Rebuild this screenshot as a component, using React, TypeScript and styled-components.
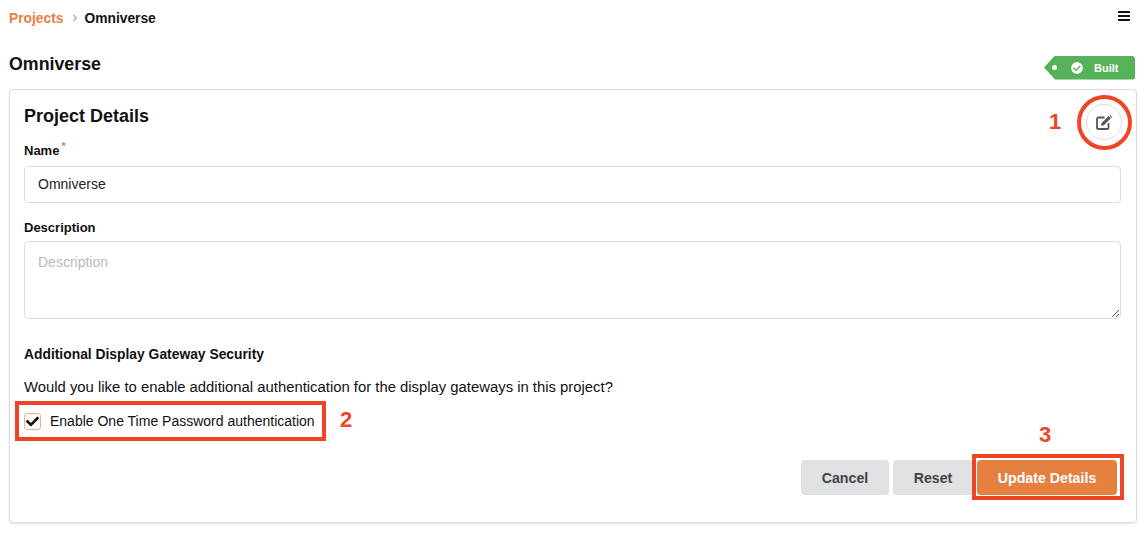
import React from "react";
import styled, { createGlobalStyle } from "styled-components";
import { FaCheckCircle, FaCheck, FaChevronRight } from "react-icons/fa";

const GlobalStyle = createGlobalStyle`
    html, body {
        margin: 0;
        padding: 0;
        background: #fff;
        font-family: "Liberation Sans", Arial, sans-serif;
        color: #111;
    }
    * { box-sizing: border-box; }
`;

const Page = styled.div`
    position: relative;
    width: 1146px;
    height: 533px;
    padding: 0 9px;
    overflow: hidden;
`;

const TopBar = styled.div`
    display: flex;
    align-items: center;
    justify-content: space-between;
    height: 36px;
    padding-right: 7px;
`;

const Crumbs = styled.nav`
    display: flex;
    align-items: center;
    font-size: 13.8px;
    font-weight: 700;
`;

const CrumbLink = styled.a`
    color: #e9803f;
`;

const CrumbArrow = styled.span`
    display: flex;
    margin: 0 5px 0 8px;
    color: #aaa;
    font-size: 8px;
`;

const MenuIcon = styled.div`
    display: flex;
    flex-direction: column;
    gap: 2px;
    width: 12px;
    margin-top: -4px;
    span {
        height: 2px;
        background: #111;
    }
`;

const TitleRow = styled.div`
    display: flex;
    align-items: center;
    justify-content: space-between;
    height: 53px;
    padding: 9px 2px 0 0;
`;

const PageTitle = styled.h1`
    margin: 0 0 6px;
    font-size: 17.8px;
    font-weight: 700;
`;

const Badge = styled.div`
    display: flex;
    align-items: center;
    width: 91px;
    height: 24px;
    margin-top: 1px;
    padding-left: 8px;
    background: #56b258;
    color: #fff;
    font-size: 11px;
    font-weight: 700;
    border-radius: 0 3px 3px 0;
    clip-path: polygon(0 50%, 11px 0, 100% 0, 100% 100%, 11px 100%);
    svg {
        font-size: 12px;
        margin: 0 11px 0 14px;
    }
`;

const BadgeDot = styled.span`
    width: 5px;
    height: 5px;
    border-radius: 50%;
    background: #fff;
`;

const Card = styled.section`
    height: 434px;
    padding: 15px 14px;
    border: 1px solid #dcdcdc;
    border-radius: 4px;
    box-shadow: 0 1px 2px rgba(0, 0, 0, 0.12);
`;

const CardHeader = styled.div`
    display: flex;
    align-items: center;
    justify-content: space-between;
    height: 23px;
`;

const CardTitle = styled.h2`
    margin: 0;
    font-size: 18px;
    font-weight: 700;
`;

const EditButton = styled.button`
    display: flex;
    align-items: center;
    justify-content: center;
    width: 36px;
    height: 36px;
    margin: 11px 0 0 0;
    padding: 0;
    color: #555;
    background: #fff;
    border: 1px solid #ddd;
    border-radius: 50%;
`;

const Label = styled.label<{ $top: number }>`
    display: block;
    margin-top: ${(p) => p.$top}px;
    font-size: 13px;
    font-weight: 700;
    line-height: 16px;
`;

const SectionLabel = styled(Label)`
    font-size: 13.85px;
`;

const Required = styled.sup`
    margin-left: 2px;
    color: #e9803f;
    font-size: 11px;
    line-height: 0;
`;

const TextInput = styled.input`
    display: block;
    width: 1097px;
    height: 37px;
    margin-top: 7px;
    padding: 0 13px 2px;
    color: #222;
    font: 14px "Liberation Sans", Arial, sans-serif;
    border: 1px solid #dcdcdc;
    border-radius: 4px;
`;

const TextArea = styled.textarea`
    display: block;
    width: 1097px;
    height: 78px;
    margin-top: 5px;
    padding: 12px 13px;
    font: 14px "Liberation Sans", Arial, sans-serif;
    border: 1px solid #dcdcdc;
    border-radius: 4px;
    &::placeholder {
        color: #bbb;
    }
`;

const Paragraph = styled.p`
    margin: 17px 0 0;
    font-size: 14.85px;
    line-height: 16px;
`;

const CheckRow = styled.div`
    display: flex;
    align-items: center;
    gap: 9px;
    height: 18px;
    margin-top: 17px;
    font-size: 14px;
`;

const CheckBox = styled.span`
    display: flex;
    align-items: center;
    justify-content: center;
    width: 17px;
    height: 17px;
    color: #111;
    font-size: 13px;
    border: 1px solid #eeb08a;
    border-radius: 3px;
`;

const Actions = styled.div`
    display: flex;
    justify-content: flex-end;
    gap: 4px;
    margin-top: 30px;
    padding-right: 5px;
`;

const ActionButton = styled.button<{ $primary?: boolean; $width: number }>`
    width: ${(p) => p.$width}px;
    height: 35px;
    padding: 0;
    color: ${(p) => (p.$primary ? "#fff" : "#444")};
    font: 700 14.2px "Liberation Sans", Arial, sans-serif;
    background: ${(p) => (p.$primary ? "#e5803f" : "#e0e1e3")};
    border: 0;
    border-radius: 4px;
`;

const Marker = styled.div<{ $x: number; $y: number; $w: number; $h: number; $round?: boolean }>`
    position: absolute;
    left: ${(p) => p.$x}px;
    top: ${(p) => p.$y}px;
    width: ${(p) => p.$w}px;
    height: ${(p) => p.$h}px;
    border: 4px solid #ee4427;
    border-radius: ${(p) => (p.$round ? "50%" : "0")};
`;

const Callout = styled.span<{ $x: number; $y: number }>`
    position: absolute;
    left: ${(p) => p.$x}px;
    top: ${(p) => p.$y}px;
    color: #ee4427;
    font-size: 22px;
    font-weight: 700;
    line-height: 24px;
`;

function EditIcon() {
    return (
        <svg width="17" height="15" viewBox="0 0 17 15" fill="none">
            <path d="M8.5 2.5H2.6C1.7 2.5 1 3.2 1 4.1v8.3c0 .9.7 1.6 1.6 1.6h8.3c.9 0 1.6-.7 1.6-1.6V8" stroke="currentColor" strokeWidth="1.8" />
            <path d="M5 10.8 5.6 8 12.6 1l2.3 2.3-7 7z" fill="currentColor" />
            <path d="M13.4.4l.6-.4 2.4 2.4-.7.7z" fill="currentColor" />
        </svg>
    );
}

export default function App() {
    return (
        <Page>
            <GlobalStyle />
            <TopBar>
                <Crumbs>
                    <CrumbLink>Projects</CrumbLink>
                    <CrumbArrow>
                        <FaChevronRight />
                    </CrumbArrow>
                    <span>Omniverse</span>
                </Crumbs>
                <MenuIcon>
                    <span />
                    <span />
                    <span />
                </MenuIcon>
            </TopBar>
            <TitleRow>
                <PageTitle>Omniverse</PageTitle>
                <Badge>
                    <BadgeDot />
                    <FaCheckCircle />
                    Built
                </Badge>
            </TitleRow>
            <Card>
                <CardHeader>
                    <CardTitle>Project Details</CardTitle>
                    <EditButton>
                        <EditIcon />
                    </EditButton>
                </CardHeader>
                <Label $top={15}>
                    Name<Required>*</Required>
                </Label>
                <TextInput defaultValue="Omniverse" />
                <Label $top={17}>Description</Label>
                <TextArea placeholder="Description" />
                <SectionLabel $top={27}>Additional Display Gateway Security</SectionLabel>
                <Paragraph>Would you like to enable additional authentication for the display gateways in this project?</Paragraph>
                <CheckRow>
                    <CheckBox>
                        <FaCheck />
                    </CheckBox>
                    Enable One Time Password authentication
                </CheckRow>
                <Actions>
                    <ActionButton $width={88}>Cancel</ActionButton>
                    <ActionButton $width={80}>Reset</ActionButton>
                    <ActionButton $primary $width={140}>
                        Update Details
                    </ActionButton>
                </Actions>
            </Card>
            <Marker $round $x={1077} $y={95} $w={55} $h={55} />
            <Marker $x={15} $y={401} $w={311} $h={40} />
            <Marker $x={972} $y={454} $w={152} $h={46} />
            <Callout $x={1049} $y={110}>1</Callout>
            <Callout $x={340} $y={408}>2</Callout>
            <Callout $x={1039} $y={423}>3</Callout>
        </Page>
    );
}
